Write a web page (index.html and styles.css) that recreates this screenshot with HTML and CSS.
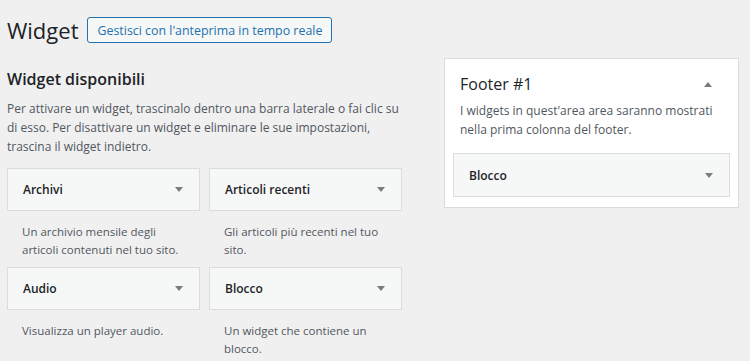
FILE: index.html
```html
<!DOCTYPE html>
<html lang="it">
<head>
<meta charset="utf-8">
<title>Widget</title>
<link rel="stylesheet" href="styles.css">
</head>
<body>
<div class="page">
  <div class="title-row">
    <h1 class="title">Widget</h1>
    <a class="btn">Gestisci con l'anteprima in tempo reale</a>
  </div>
  <div class="columns">
    <section class="available">
      <h2 class="avail-title">Widget disponibili</h2>
      <p class="avail-desc">Per attivare un widget, trascinalo dentro una barra laterale o fai clic su di esso. Per disattivare un widget e eliminare le sue impostazioni, trascina il widget indietro.</p>
      <div class="widget-grid">
        <div class="widget">
          <div class="widget-top"><span class="widget-name">Archivi</span><span class="arrow-down"></span></div>
          <p class="widget-desc">Un archivio mensile degli articoli contenuti nel tuo sito.</p>
        </div>
        <div class="widget">
          <div class="widget-top"><span class="widget-name">Articoli recenti</span><span class="arrow-down"></span></div>
          <p class="widget-desc">Gli articoli più recenti nel tuo sito.</p>
        </div>
        <div class="widget">
          <div class="widget-top"><span class="widget-name">Audio</span><span class="arrow-down"></span></div>
          <p class="widget-desc">Visualizza un player audio.</p>
        </div>
        <div class="widget">
          <div class="widget-top"><span class="widget-name">Blocco</span><span class="arrow-down"></span></div>
          <p class="widget-desc">Un widget che contiene un blocco.</p>
        </div>
      </div>
    </section>
    <section class="sidebar">
      <div class="sidebar-head">
        <h2 class="sidebar-title">Footer #1</h2>
        <span class="arrow-up"></span>
      </div>
      <p class="sidebar-desc">I widgets in quest'area area saranno mostrati nella prima colonna del footer.</p>
      <div class="widget-top inner"><span class="widget-name">Blocco</span><span class="arrow-down"></span></div>
    </section>
  </div>
</div>
</body>
</html>
```

FILE: styles.css
```css
html, body {
  margin: 0;
  padding: 0;
  background: #f0f0f1;
}
body {
  font-family: "Open Sans", "Noto Sans", sans-serif;
  color: #1d2327;
  font-size: 12px;
}
.page {
  padding: 17px 0 0 7px;
  width: 732px;
}
.title-row {
  display: flex;
  align-items: center;
  gap: 9px;
  height: 26px;
}
.title {
  margin: 0;
  font-size: 22px;
  font-weight: 400;
  line-height: 26px;
  color: #1d2327;
}
.btn {
  box-sizing: border-box;
  height: 26px;
  display: flex;
  align-items: center;
  padding: 0 9px;
  border: 1px solid #2271b1;
  border-radius: 3px;
  background: #f6f7f7;
  color: #2271b1;
  font-size: 12.4px;
}
.columns {
  display: flex;
  gap: 42px;
  align-items: flex-start;
}
.available {
  width: 395px;
  padding-top: 25px;
}
.avail-title {
  margin: 0;
  font-size: 16px;
  font-weight: 600;
  line-height: 22px;
}
.avail-desc {
  margin: 9px 0 0;
  line-height: 19px;
  color: #50575e;
  font-size: 12px;
}
.widget-grid {
  margin-top: 12px;
  display: grid;
  grid-template-columns: 193px 193px;
  column-gap: 9px;
}
.widget-top {
  box-sizing: border-box;
  height: 43px;
  display: flex;
  align-items: center;
  justify-content: space-between;
  padding: 0 16px 0 15px;
  background: #f6f7f7;
  border: 1px solid #dcdcde;
}
.widget-name {
  font-weight: 600;
  font-size: 12px;
}
.arrow-down {
  width: 0;
  height: 0;
  border-left: 4px solid transparent;
  border-right: 4px solid transparent;
  border-top: 5px solid #787c82;
}
.arrow-up {
  width: 0;
  height: 0;
  border-left: 4px solid transparent;
  border-right: 4px solid transparent;
  border-bottom: 5px solid #787c82;
}
.widget-desc {
  margin: 0;
  padding: 12px 15px 8px 15px;
  line-height: 18px;
  color: #50575e;
  font-size: 11.5px;
}
.sidebar {
  margin-top: 15px;
  box-sizing: border-box;
  width: 295px;
  background: #fff;
  border: 1px solid #dcdcde;
  padding: 0 8px 10px 8px;
}
.sidebar-head {
  display: flex;
  align-items: center;
  justify-content: space-between;
  padding: 14px 18px 0 7px;
}
.sidebar-title {
  margin: 0;
  font-size: 16px;
  font-weight: 400;
  line-height: 22px;
}
.sidebar-desc {
  margin: 6px 0 0;
  padding: 0 7px;
  line-height: 19px;
  color: #50575e;
  font-size: 12px;
}
.inner {
  margin-top: 14px;
  height: 44px;
}
```
